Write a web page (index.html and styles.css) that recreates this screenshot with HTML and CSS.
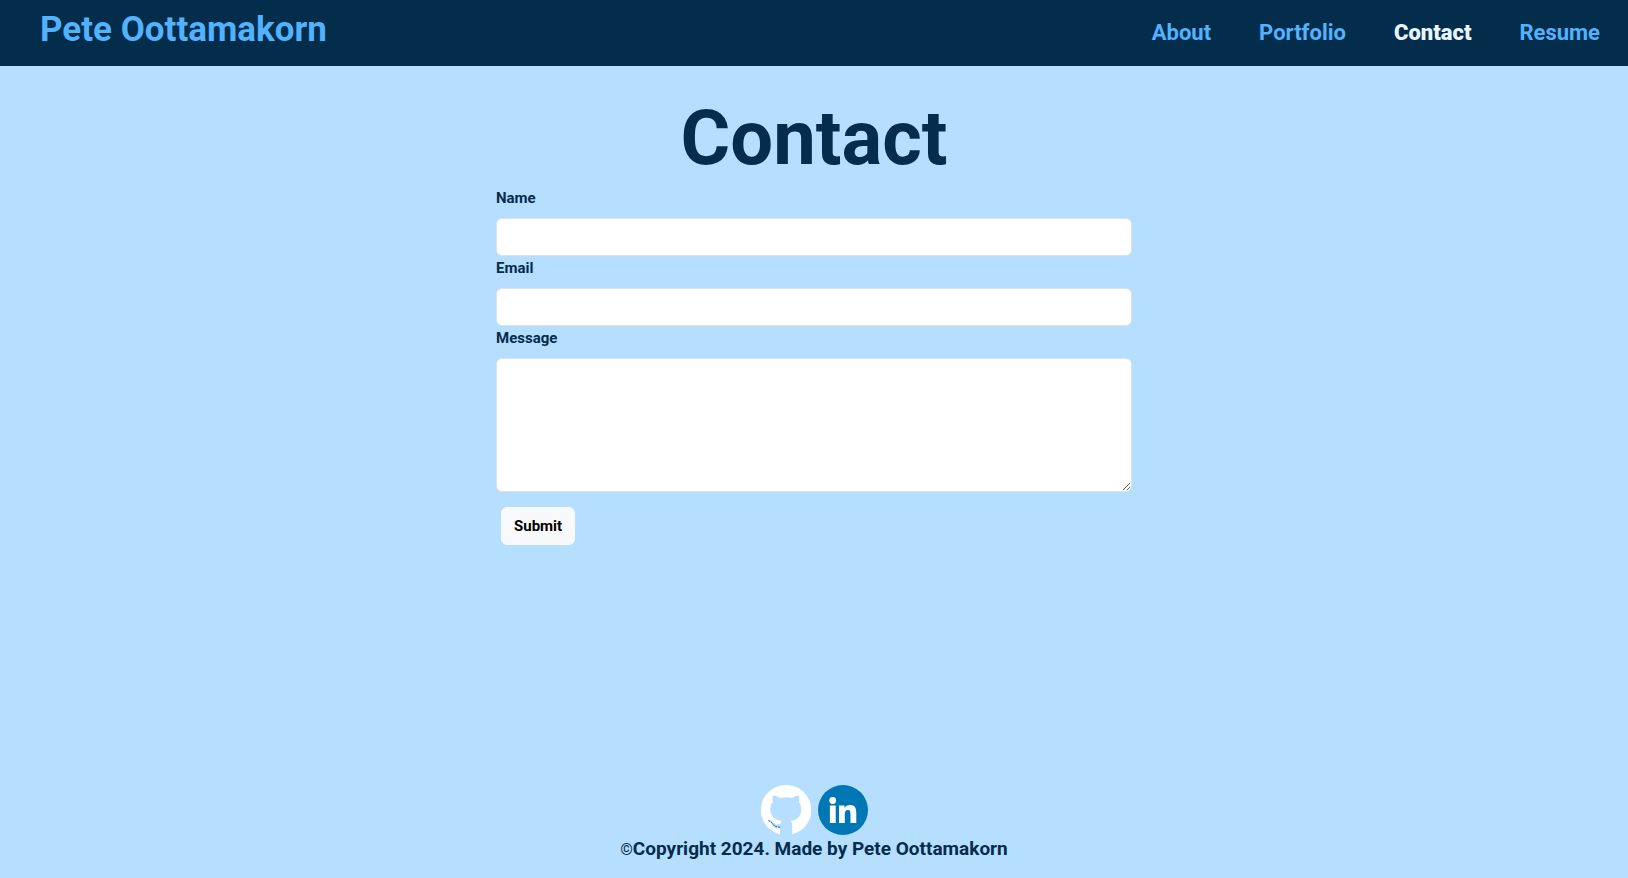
FILE: index.html
```html
<!DOCTYPE html>
<html lang="en">
<head>
  <meta charset="utf-8">
  <meta name="viewport" content="width=device-width, initial-scale=1">
  <title>Pete Oottamakorn</title>
  <link rel="stylesheet" href="styles.css">
</head>
<body>
  <header class="site-header">
    <a class="brand" href="#">Pete Oottamakorn</a>
    <nav class="site-nav">
      <a class="nav-link" href="#about">About</a>
      <a class="nav-link" href="#portfolio">Portfolio</a>
      <a class="nav-link active" href="#contact" aria-current="page">Contact</a>
      <a class="nav-link" href="#resume">Resume</a>
    </nav>
  </header>
  <main class="content">
    <h1 class="title">Contact</h1>
    <form class="contact-form">
      <label class="label" for="name">Name</label>
      <input class="field" id="name" type="text">
      <label class="label" for="email">Email</label>
      <input class="field" id="email" type="email">
      <label class="label" for="message">Message</label>
      <textarea class="field" id="message" rows="5"></textarea>
      <button class="submit" type="submit">Submit</button>
    </form>
  </main>
  <footer class="site-footer">
    <div class="social">
      <a class="social-link" href="#github" aria-label="GitHub">
        <svg viewBox="0 0 50 50" width="50" height="50">
          <path fill="#fff" d="M25 0a25 25 0 0 0-6 49.300V43C13 44.300 11.500 41 11 39.500C10.300 37.500 9 36.500 7.500 35.500C6.500 34.500 9 34.300 11 36C13 38 14 40.500 19.200 39C19.400 37.500 20 36.500 20.800 35.800C14 35 9.300 32 9.300 24C9.300 20.500 10.500 18.500 12 17C11.200 15 11.200 12.500 12 10.500C15 10.500 17.500 12 19 13C23 12 27 12 31 13C33 11.700 35.500 10.500 37.700 10.500C38.500 13 38.500 15 37.900 17C39.500 19 40.200 21 40.200 24C40.200 32 36 35 29.400 35.800C30.500 36.800 31.200 38.500 31.200 40.500V49.300A25 25 0 0 0 25 0Z"/>
          <path fill="none" stroke="#345b78" stroke-dasharray="2 1" d="M7.500 35.500l3 2 3 3.500 3 1h3"/>
        </svg>
      </a>
      <a class="social-link" href="#linkedin" aria-label="LinkedIn">
        <svg viewBox="0 0 50 50" width="50" height="50">
          <circle cx="25" cy="25" r="25" fill="#0077b5"/>
          <circle cx="14.700" cy="15.500" r="3.400" fill="#fff"/>
          <path fill="#fff" d="M11.900 20.500h5.800v17.500h-5.800zM21 20.500h5.500v2.400c1-1.700 2.900-2.900 5.500-2.900c5.200 0 6.300 3.500 6.300 8.400V38h-5.800v-8.500c0-2.500-.2-4.600-2.600-4.600s-3.100 2-3.100 4.400V38H21z"/>
        </svg>
      </a>
    </div>
    <p class="copyright"><span class="mark">©</span>Copyright 2024. Made by Pete Oottamakorn</p>
  </footer>
</body>
</html>
```
FILE: styles.css
```css
* {
  box-sizing: border-box;
}

body {
  margin: 0;
  min-height: 100vh;
  display: flex;
  flex-direction: column;
  background: #b6deff;
  color: #042c4b;
  font: 700 15px/24px Roboto, "Liberation Sans", sans-serif;
}

.site-header {
  display: flex;
  justify-content: space-between;
  align-items: flex-start;
  padding: 8px 28px 14px 40px;
  background: #042c4b;
}

.brand {
  color: #51b2fd;
  font-size: 35px;
  line-height: 44px;
  text-decoration: none;
}

.site-nav {
  display: flex;
  gap: 48px;
  padding-top: 6px;
}

.nav-link {
  color: #51b2fd;
  font-size: 22px;
  line-height: 38px;
  text-decoration: none;
}

.nav-link.active {
  color: #e8f5ff;
  font-weight: 900;
}

.content {
  flex: 1;
  width: 100%;
  max-width: 660px;
  margin: 0 auto;
  padding: 26px 12px;
}

.title {
  margin: 0 0 2px;
  font-size: 76px;
  line-height: 92px;
  text-align: center;
}

.contact-form {
  display: flex;
  flex-direction: column;
}

.label {
  margin-bottom: 8px;
}

.field {
  width: 100%;
  padding: 6px 12px;
  border: 1px solid #dee2e6;
  border-radius: 6px;
  background: #fff;
  color: #212529;
  font: 400 16px/24px Roboto, "Liberation Sans", sans-serif;
  resize: vertical;
}

.submit {
  align-self: flex-start;
  margin: 15px 5px 0;
  padding: 6px 12px;
  border: 1px solid #f8f9fa;
  border-radius: 6px;
  background: #f8f9fa;
  color: #000;
  font: inherit;
}

.site-footer {
  padding-bottom: 15px;
  text-align: center;
}

.social {
  display: flex;
  justify-content: center;
  gap: 7px;
}

.social-link {
  display: flex;
}

.copyright {
  margin: 0;
  font-size: 19px;
  line-height: 28px;
}

.mark {
  font-weight: 400;
  font-size: 16px;
  line-height: 1;
}
```
